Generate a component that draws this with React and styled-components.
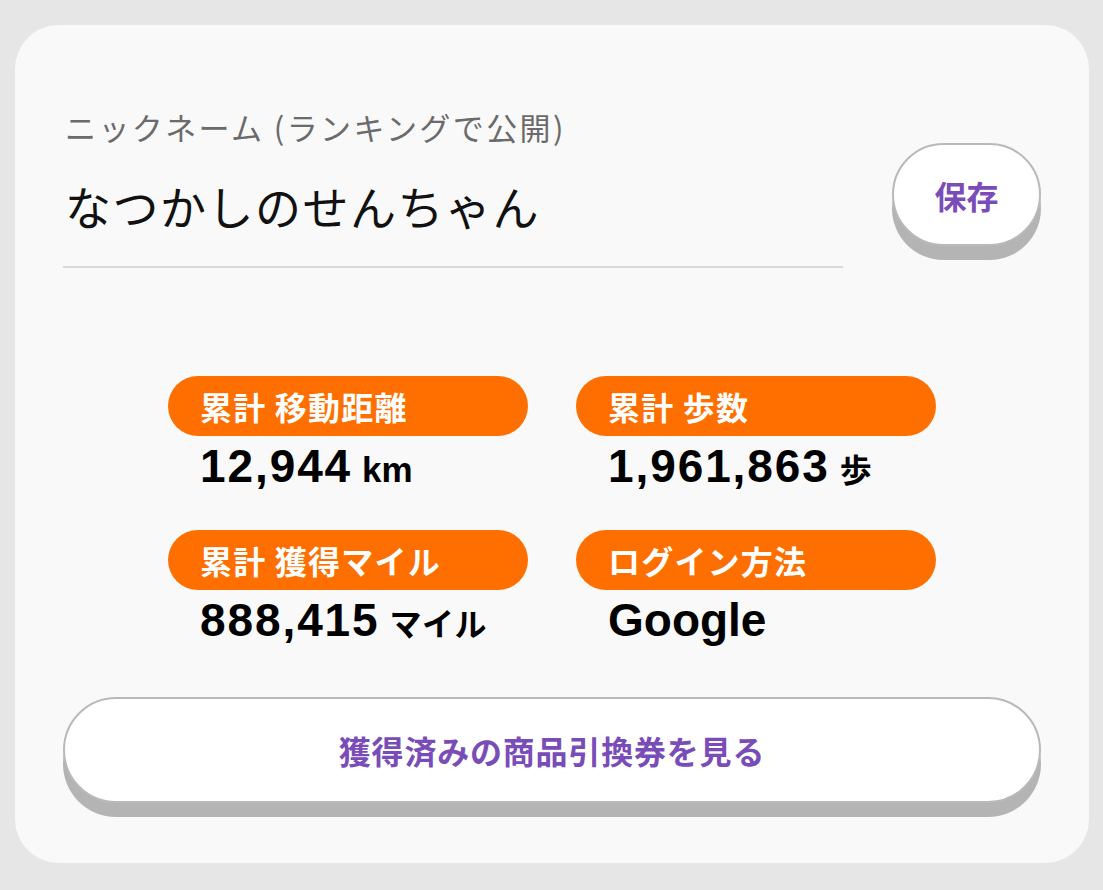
import React from "react";
import styled, { createGlobalStyle } from "styled-components";

const Global = createGlobalStyle`
  html, body {
    margin: 0;
    padding: 0;
    background: #e6e6e6;
  }
  body {
    font-family: "Noto Sans CJK JP", "Noto Sans", sans-serif;
  }
  * { box-sizing: border-box; }
`;

const Page = styled.div`
  padding: 25px 14px 27px 15px;
`;

const Card = styled.div`
  width: 1074px;
  background: #f9f9f9;
  border-radius: 44px;
  padding: 83px 48px 48px 48px;
`;

const TopRow = styled.div`
  display: flex;
  justify-content: space-between;
  align-items: flex-start;
`;

const Field = styled.div`
  width: 780px;
  display: flex;
  flex-direction: column;
`;

const Label = styled.label`
  font-size: 31px;
  line-height: 38px;
  letter-spacing: 2.4px;
  color: #6b6b6b;
  padding-left: 2px;
`;

const NameInput = styled.input`
  margin-top: 31px;
  border: none;
  border-bottom: 2px solid #d8d8de;
  background: transparent;
  font-family: "Noto Sans CJK JP", sans-serif;
  font-size: 46px;
  line-height: 56px;
  letter-spacing: 1.5px;
  height: 91px;
  padding: 0 0 33px 2px;
  color: #111;
  outline: none;
`;

const RaisedButton = styled.button`
  background: #fff;
  border: 2px solid #b9b9b9;
  box-shadow: 0 14px 0 #b4b4b4;
  border-radius: ${(p) => p.$radius}px;
  color: #7a4cb8;
  font-family: "Noto Sans CJK JP", sans-serif;
  font-weight: 700;
  font-size: ${(p) => p.$size}px;
  letter-spacing: ${(p) => p.$ls || 0}px;
  width: ${(p) => p.$width};
  height: ${(p) => p.$height}px;
  margin-top: ${(p) => p.$mt}px;
  padding: 0;
  cursor: pointer;
`;

const Grid = styled.div`
  margin: 108px auto 0;
  width: 768px;
  display: grid;
  grid-template-columns: 360px 360px;
  column-gap: 48px;
  row-gap: 34px;
`;

const Stat = styled.div`
  display: flex;
  flex-direction: column;
`;

const Pill = styled.div`
  height: 60px;
  border-radius: 30px;
  background: #ff6f00;
  color: #fff;
  font-weight: 700;
  font-size: 32px;
  line-height: 60px;
  letter-spacing: 1.2px;
  padding-left: 32px;
  white-space: pre;
`;

const Value = styled.div`
  height: 60px;
  line-height: 60px;
  padding-left: 32px;
  color: #000;
  font-family: "Liberation Sans", "Noto Sans CJK JP", sans-serif;
  font-weight: 700;
  font-size: 46px;
  letter-spacing: ${(p) => (p.$numeric ? 1.9 : 0)}px;
  white-space: nowrap;
`;

const Unit = styled.span`
  font-family: ${(p) => (p.$jp ? '"Noto Sans CJK JP", sans-serif' : '"Liberation Sans", sans-serif')};
  font-size: ${(p) => (p.$jp ? 32 : 35)}px;
  font-weight: 700;
  letter-spacing: ${(p) => (p.$jp ? 0.5 : 0)}px;
  margin-left: 10px;
`;

const BottomWrap = styled.div`
  margin-top: 47px;
  margin-bottom: 12px;
`;

const stats = [
  { label: "累計 移動距離", value: "12,944", unit: "km", numeric: true },
  { label: "累計 歩数", value: "1,961,863", unit: "歩", jp: true, numeric: true },
  { label: "累計 獲得マイル", value: "888,415", unit: "マイル", jp: true, numeric: true },
  { label: "ログイン方法", value: "Google" },
];

export default function App() {
  return (
    <>
      <Global />
      <Page>
        <Card>
          <TopRow>
            <Field>
              <Label>ニックネーム (ランキングで公開)</Label>
              <NameInput defaultValue="なつかしのせんちゃん" />
            </Field>
            <RaisedButton $radius={52} $size={32} $width="149px" $height={103} $mt={35}>
              保存
            </RaisedButton>
          </TopRow>
          <Grid>
            {stats.map((s) => (
              <Stat key={s.label}>
                <Pill>{s.label}</Pill>
                <Value $numeric={s.numeric}>
                  {s.value}
                  {s.unit && <Unit $jp={s.jp}>{s.unit}</Unit>}
                </Value>
              </Stat>
            ))}
          </Grid>
          <BottomWrap>
            <RaisedButton $radius={54} $size={32} $ls={0.8} $width="100%" $height={106} $mt={0}>
              獲得済みの商品引換券を見る
            </RaisedButton>
          </BottomWrap>
        </Card>
      </Page>
    </>
  );
}
